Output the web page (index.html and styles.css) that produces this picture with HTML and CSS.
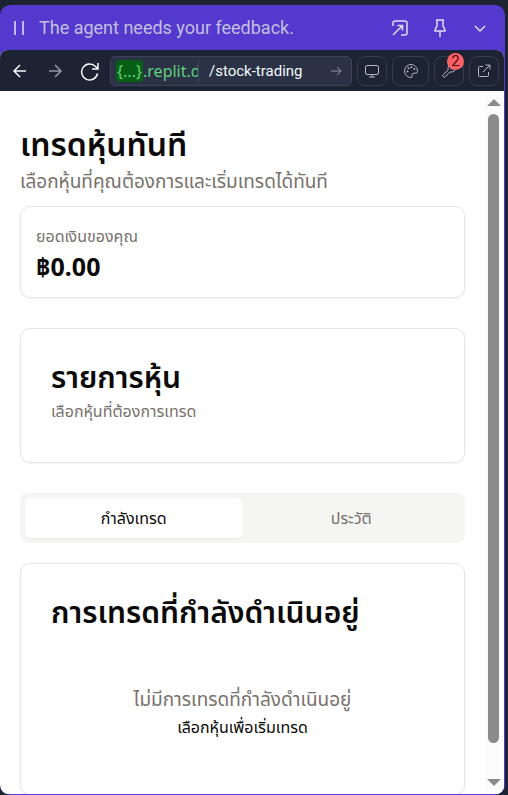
FILE: index.html
```html
<!DOCTYPE html>
<html lang="th">
<head>
<meta charset="utf-8">
<meta name="viewport" content="width=device-width, initial-scale=1">
<title>เทรดหุ้นทันที</title>
<link rel="stylesheet" href="styles.css">
</head>
<body>
<div class="window">
  <header class="titlebar">
    <svg class="grip" width="10" height="16" viewBox="0 0 10 16" aria-hidden="true"><path d="M1 1v14M9 1v14"/></svg>
    <p class="status" lang="en">The agent needs your feedback.</p>
    <div class="title-actions">
      <button type="button" aria-label="Expand"><svg width="18" height="18" viewBox="0 0 18 18"><path d="M2 7V4a2 2 0 0 1 2-2h10a2 2 0 0 1 2 2v10a2 2 0 0 1-2 2h-4M6.500 6.500h5v5M11.500 6.500L2 16"/></svg></button>
      <button type="button" aria-label="Pin"><svg width="18" height="20" viewBox="0 0 18 20"><path d="M5 2h8M6 2v6l-2 4v1h10v-1l-2-4V2M9 13v6"/></svg></button>
      <button type="button" aria-label="Collapse"><svg width="18" height="18" viewBox="0 0 18 18"><path d="M4 7l5 5 5-5"/></svg></button>
    </div>
  </header>
  <div class="panel">
    <nav class="toolbar" aria-label="Browser">
      <button class="nav-button" type="button" aria-label="Back"><svg width="16" height="16" viewBox="0 0 16 16"><path d="M14 8H2M8 2L2 8l6 6"/></svg></button>
      <button class="nav-button dim" type="button" aria-label="Forward"><svg width="16" height="16" viewBox="0 0 16 16"><path d="M2 8h12M8 2l6 6-6 6"/></svg></button>
      <button class="nav-button" type="button" aria-label="Reload"><svg width="20" height="20" viewBox="0 0 20 20"><path d="M18 2v6h-6M18 8l-2.500-2.500A8 8 0 1 0 17.500 12.500"/></svg></button>
      <form class="address">
        <span class="host" lang="en"><span class="host-tag">{...}</span><span class="host-name">.replit.dev</span></span>
        <label class="hidden" for="path">Path</label>
        <input id="path" type="text" value="/stock-trading">
        <button type="button" aria-label="Go"><svg width="12" height="12" viewBox="0 0 12 12"><path d="M1 6h10M7 2l4 4-4 4"/></svg></button>
      </form>
      <button class="tool" type="button" aria-label="Devices"><svg width="16" height="16" viewBox="0 0 16 16"><rect x="1.500" y="2.500" width="13" height="9" rx="1.500"/><path d="M8 11.500V14M5 14h6"/></svg></button>
      <button class="tool wide" type="button" aria-label="Theme"><svg width="16" height="16" viewBox="0 0 16 16"><path d="M8 1.500a6.500 6.500 0 1 0 0 13c1.500 0 1.700-1.200 1.200-2-.6-1 0-2.300 1.400-2.300h2.200c1 0 1.700-.8 1.700-2C14.500 4.500 11.600 1.500 8 1.500z"/><path class="dots" d="M4.500 8.500v.01M5.500 5.300v.01M8.500 4.200v.01M11.300 6v.01"/></svg></button>
      <button class="tool" type="button" aria-label="Developer tools, 2 issues"><svg width="16" height="16" viewBox="0 0 16 16"><path d="M9.800 4.200a1 1 0 0 0 0 1l1 1a1 1 0 0 0 1 0L14.300 3.700a4 4 0 0 1-5.200 5.100L4.300 13.700a1.300 1.300 0 0 1-2-2L7.200 6.900a4 4 0 0 1 5.100-5.200z"/></svg><span class="badge">2</span></button>
      <button class="tool" type="button" aria-label="Open in new tab"><svg width="16" height="16" viewBox="0 0 16 16"><path d="M9.500 2h4.500v4.500M14 2L7 9M7 3.500H3.500a1 1 0 0 0-1 1v8a1 1 0 0 0 1 1h8a1 1 0 0 0 1-1V9"/></svg></button>
    </nav>
    <div class="viewport">
      <main class="page">
        <h1>เทรดหุ้นทันที</h1>
        <p class="lead">เลือกหุ้นที่คุณต้องการและเริ่มเทรดได้ทันที</p>
        <section class="card balance">
          <p class="note">ยอดเงินของคุณ</p>
          <p class="amount">฿0.00</p>
        </section>
        <section class="card list">
          <h2>รายการหุ้น</h2>
          <p class="note">เลือกหุ้นที่ต้องการเทรด</p>
        </section>
        <div class="tabs" role="tablist">
          <button class="tab active" type="button" role="tab" aria-selected="true">กำลังเทรด</button>
          <button class="tab" type="button" role="tab" aria-selected="false">ประวัติ</button>
        </div>
        <section class="card trades">
          <h2>การเทรดที่กำลังดำเนินอยู่</h2>
          <div class="empty">
            <p class="lead">ไม่มีการเทรดที่กำลังดำเนินอยู่</p>
            <a href="#">เลือกหุ้นเพื่อเริ่มเทรด</a>
          </div>
        </section>
      </main>
      <div class="scrollbar" aria-hidden="true">
        <svg width="14" height="7" viewBox="0 0 14 7"><path d="M0 7L7 0l7 7z"/></svg>
        <div class="thumb"></div>
        <svg width="14" height="7" viewBox="0 0 14 7"><path d="M0 0h14L7 7z"/></svg>
      </div>
    </div>
  </div>
</div>
</body>
</html>
```
FILE: styles.css
```css
* { box-sizing: border-box; }

body {
  margin: 0;
  background: #1c2333;
  color: #0c0a09;
  font-family: "Noto Sans", "Noto Sans Thai", sans-serif;
}

h1, h2, p { margin: 0; }

button {
  margin: 0;
  padding: 0;
  border: 0;
  background: none;
  color: inherit;
  font: inherit;
}

svg {
  display: block;
  flex: none;
  fill: none;
  stroke: currentColor;
}

.window {
  display: flex;
  flex-direction: column;
  height: calc(100vh - 5px);
  margin: 5px 3px 0 0;
  padding: 0 1px 1px 0;
  border-radius: 10px;
  overflow: hidden;
  background: #5339cd;
}

.titlebar {
  display: flex;
  flex: none;
  align-items: center;
  height: 45px;
  padding: 0 15px 0 14px;
  color: #e0dcf5;
}

.grip {
  color: #c2b8ed;
  stroke-width: 2;
}

.status {
  flex: 1;
  margin-left: 15px;
  color: #c3bfe0;
  font-family: Roboto, sans-serif;
  font-size: 18px;
  line-height: 24px;
  white-space: nowrap;
}

.title-actions { display: flex; gap: 22px; }

.title-actions button {
  display: flex;
  align-items: center;
}

.title-actions svg { stroke-width: 1.5; }

.panel {
  display: flex;
  flex: 1;
  flex-direction: column;
  min-height: 0;
  border-radius: 8px;
  overflow: hidden;
  background: #fff;
}

.toolbar {
  display: flex;
  flex: none;
  align-items: center;
  height: 41px;
  padding: 0 5px 0 0;
  background: #1c2333;
  color: #f5f9fc;
}

.nav-button {
  display: grid;
  flex: none;
  place-items: center;
  width: 35px;
  height: 30px;
}

.nav-button:first-child { margin-left: 2px; }
.nav-button svg { stroke-width: 1.5; }
.dim { color: #8f96a5; }

.address {
  display: flex;
  flex: 1;
  align-items: center;
  min-width: 0;
  height: 30px;
  margin: 0 5px 0 3px;
  border: 1px solid #3c445c;
  border-radius: 5px;
  overflow: hidden;
  background: #2b3245;
}

.host {
  display: flex;
  flex: none;
  align-items: center;
  width: 88px;
  padding-left: 5px;
  border-right: 1px solid #3c445c;
  overflow: hidden;
  color: #5fd17a;
  font-size: 16px;
  line-height: 22px;
  white-space: nowrap;
}

.host-tag {
  flex: none;
  padding: 0 1px;
  border-radius: 4px;
  background: #065f14;
}

.host-name { flex: none; }

.address input {
  flex: 1;
  min-width: 0;
  height: 28px;
  padding: 0 10px;
  border: 0;
  outline: 0;
  background: none;
  color: #f5f9fc;
  font: 15px Roboto, sans-serif;
}

.address button {
  margin-right: 9px;
  color: #8f96a5;
}

.hidden {
  position: absolute;
  width: 1px;
  height: 1px;
  overflow: hidden;
  clip-path: inset(50%);
}

.tool {
  position: relative;
  display: grid;
  flex: none;
  place-items: center;
  width: 30px;
  height: 30px;
  margin-left: 5px;
  border: 1px solid #353d53;
  border-radius: 8px;
  color: #b3b8c4;
}

.address + .tool { margin-left: 0; }
.tool.wide { width: 37px; }
.dots { stroke-width: 2; stroke-linecap: round; }

.badge {
  position: absolute;
  top: -4px;
  right: -1px;
  width: 17px;
  height: 17px;
  border-radius: 50%;
  background: #ff6166;
  color: #4a0a10;
  font: 15px/17px Roboto, sans-serif;
  text-align: center;
}

.viewport {
  display: flex;
  flex: 1;
  min-height: 0;
}

.page {
  display: flex;
  flex: 1;
  flex-direction: column;
  min-width: 0;
  padding: 30px 20px 0;
  overflow: hidden;
}

h1, h2 {
  font-weight: 600;
  line-height: 45px;
  white-space: nowrap;
}

h1 { font-size: 32px; }
h2 { font-size: 30px; }

.lead {
  color: #78716c;
  font-size: 19px;
  line-height: 30px;
}

.note {
  color: #78716c;
  font-size: 16px;
  line-height: 25px;
}

.card {
  flex: none;
  border: 1px solid #e7e5e4;
  border-radius: 10px;
  background: #fff;
  box-shadow: 0 1px 2px rgba(0, 0, 0, 0.05);
}

.balance {
  margin: 10px 0 30px;
  padding: 17px 15px 13px;
}

.amount {
  font-size: 25px;
  font-weight: 700;
  line-height: 35px;
}

.list { padding: 25px 30px 38px; }

.tabs {
  display: grid;
  grid-template-columns: 1fr 1fr;
  flex: none;
  height: 50px;
  margin: 30px 0 20px;
  padding: 5px;
  border-radius: 8px;
  background: #f5f5f4;
}

.tab {
  padding-top: 2px;
  border-radius: 6px;
  color: #78716c;
  font-size: 16px;
}

.tab.active {
  background: #fff;
  color: #0c0a09;
  box-shadow: 0 1px 2px rgba(0, 0, 0, 0.05);
}

.trades { padding: 25px 30px 53px; }

.empty {
  margin-top: 50px;
  text-align: center;
}

.empty a {
  display: block;
  color: #0c0a09;
  font-size: 16px;
  line-height: 27px;
  text-decoration: none;
}

.scrollbar {
  display: flex;
  flex: none;
  flex-direction: column;
  align-items: center;
  gap: 8px;
  width: 19px;
  padding: 8px 2px 8px 0;
  background: #fcfcfc;
}

.scrollbar svg { fill: #8b8b8b; stroke: none; }

.thumb {
  flex: 1;
  width: 11px;
  margin-bottom: 28px;
  border-radius: 6px;
  background: #8b8b8b;
}
```
